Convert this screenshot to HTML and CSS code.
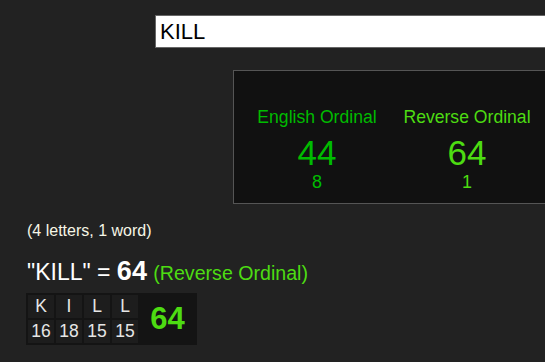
FILE: index.html
```html
<!DOCTYPE html>
<html>
<head>
<meta charset="utf-8">
<link rel="stylesheet" href="styles.css">
</head>
<body>
<div class="page">
  <div class="search-row">
    <input class="search" type="text" value="KILL">
  </div>
  <div class="results-row">
    <div class="results">
      <div class="cipher english">
        <div class="cname">English Ordinal</div>
        <div class="cval">44</div>
        <div class="csub">8</div>
      </div>
      <div class="cipher reverse">
        <div class="cname">Reverse Ordinal</div>
        <div class="cval">64</div>
        <div class="csub">1</div>
      </div>
    </div>
  </div>
  <div class="count">(4 letters, 1 word)</div>
  <div class="equation">"KILL" = <b class="total">64</b> <span class="eqname">(Reverse Ordinal)</span></div>
  <table class="breakdown">
    <tr>
      <td class="let">K</td><td class="let">I</td><td class="let">L</td><td class="let">L</td>
      <td class="sum" rowspan="2">64</td>
    </tr>
    <tr>
      <td class="num">16</td><td class="num">18</td><td class="num">15</td><td class="num">15</td>
    </tr>
  </table>
</div>
</body>
</html>
```

FILE: styles.css
```css
html, body {
  margin: 0;
  padding: 0;
  background: #222222;
  overflow: hidden;
}
body {
  font-family: "Liberation Sans", Arial, sans-serif;
  color: #ffffff;
  width: 545px;
  height: 362px;
}
.page {
  width: 545px;
  height: 362px;
  overflow: hidden;
  padding-top: 15px;
  box-sizing: border-box;
}
.search-row {
  padding-left: 155px;
  overflow: hidden;
}
.search {
  display: block;
  box-sizing: border-box;
  width: 420px;
  height: 33px;
  margin: 0;
  border: 1px solid #666666;
  background: #ffffff;
  color: #000000;
  font-family: "Liberation Sans", Arial, sans-serif;
  font-size: 22px;
  padding: 0 0 0 4px;
  outline: none;
}
.results-row {
  padding-left: 233px;
  margin-top: 22px;
  overflow: hidden;
}
.results {
  box-sizing: border-box;
  width: 340px;
  height: 134px;
  background: #111111;
  border: 1px solid #555555;
  display: flex;
  padding: 36px 8px 0 8px;
}
.cipher {
  width: 150px;
  flex: none;
  text-align: center;
}
.english { color: #00bb00; }
.reverse { color: #4ddc12; }
.cname {
  font-size: 17.6px;
  line-height: 20px;
}
.cval {
  font-size: 35px;
  line-height: 40px;
  margin-top: 6px;
}
.csub {
  font-size: 18px;
  line-height: 18px;
}
.count {
  margin: 18px 0 0 27px;
  font-size: 16px;
  line-height: 18px;
  color: #f6f6e6;
}
.equation {
  margin: 16px 0 0 27px;
  font-size: 23px;
  line-height: 30px;
  color: #ffffff;
}
.total {
  font-size: 27px;
  font-weight: 900;
}
.eqname {
  font-size: 19.6px;
  color: #4ddc12;
}
.breakdown {
  margin: 5px 0 0 26px;
  background: #141414;
  border-collapse: separate;
  border-spacing: 2px;
}
.breakdown td {
  padding: 0;
  text-align: center;
  color: #e6e6e6;
}
.let, .num {
  width: 26px;
  height: 23px;
  background: #1d1d1d;
  font-size: 17.5px;
  line-height: 23px;
}
.sum {
  width: 55px;
  font-size: 31px;
  font-weight: bold;
  color: #4ddc12 !important;
  background: #141414;
}
```
